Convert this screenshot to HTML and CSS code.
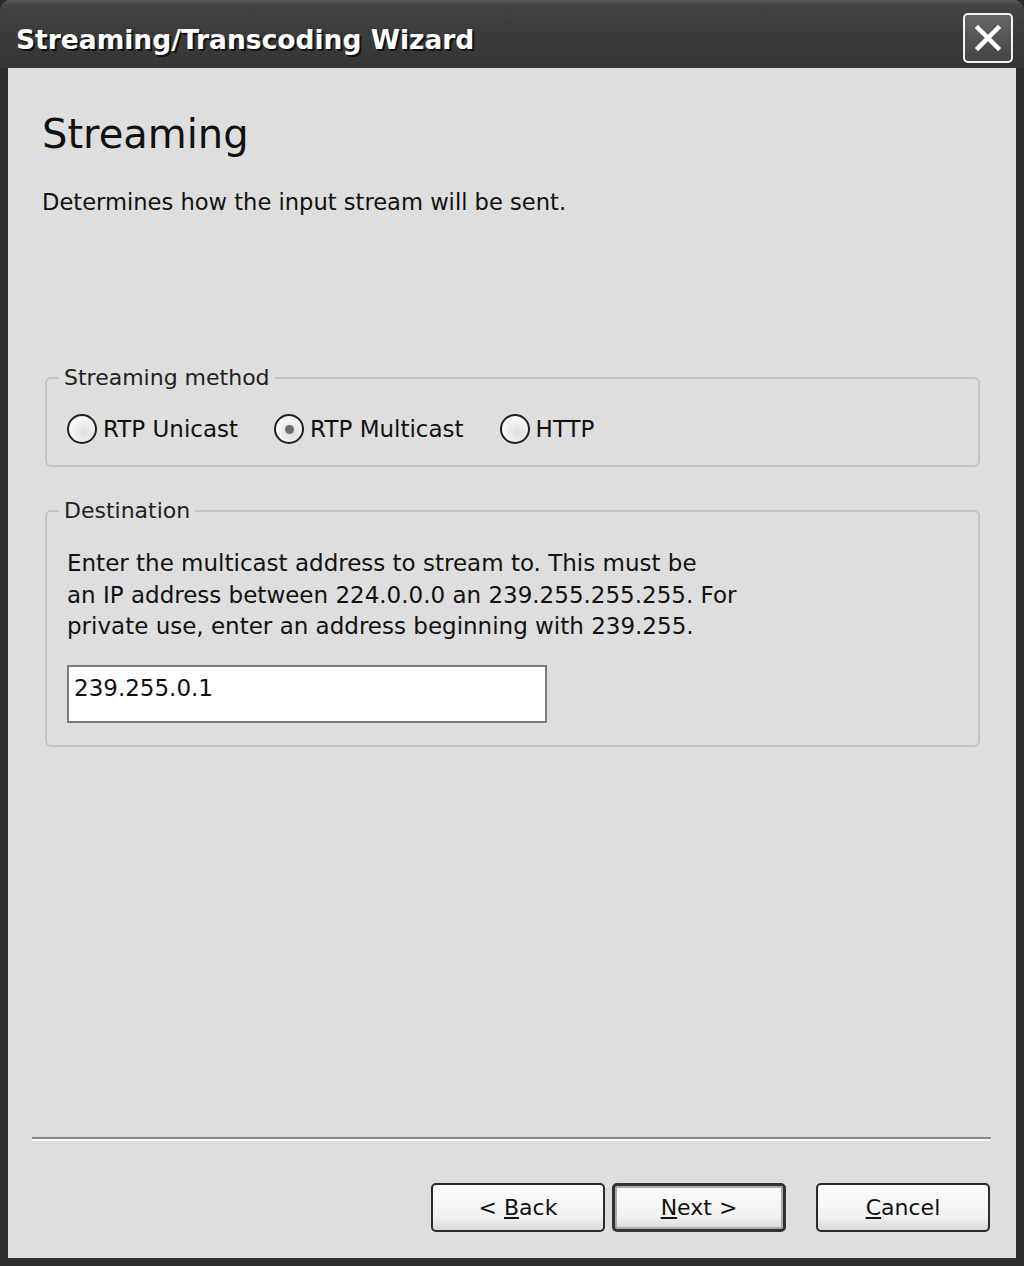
FILE: index.html
```html
<!DOCTYPE html>
<html lang="en">
<head>
    <meta charset="UTF-8">
    <title>Streaming/Transcoding Wizard</title>
    <link rel="stylesheet" href="styles.css">
</head>
<body>
    <div class="window">
        <div class="titlebar">
            <span class="title">Streaming/Transcoding Wizard</span>
            <span class="closeBtn">
                <svg width="30" height="30" viewBox="0 0 30 30">
                    <path d="M5 5 L25 25 M25 5 L5 25" stroke="#fff" stroke-width="4.5" stroke-linecap="square"/>
                </svg>
            </span>
        </div>

        <div class="content">
            <h1>Streaming</h1>
            <p class="intro">Determines how the input stream will be sent.</p>

            <fieldset class="group methodGroup">
                <legend>Streaming method</legend>
                <div class="radios">
                    <label class="radio"><span class="dot"></span>RTP Unicast</label>
                    <label class="radio checked"><span class="dot"></span>RTP Multicast</label>
                    <label class="radio"><span class="dot"></span>HTTP</label>
                </div>
            </fieldset>

            <fieldset class="group destGroup">
                <legend>Destination</legend>
                <p class="help">Enter the multicast address to stream to. This must be<br>
                an IP address between 224.0.0.0 an 239.255.255.255. For<br>
                private use, enter an address beginning with 239.255.</p>
                <div class="addrBox">239.255.0.1</div>
            </fieldset>
        </div>

        <div class="footer">
            <hr class="sep">
            <div class="buttons">
                <span class="btn"><span>&lt; <u>B</u>ack</span></span>
                <span class="btn default"><span><u>N</u>ext &gt;</span></span>
                <span class="btn cancel"><span><u>C</u>ancel</span></span>
            </div>
        </div>
    </div>
</body>
</html>
```

FILE: styles.css
```css
html, body {
    margin: 0;
    padding: 0;
    height: 100%;
}
body {
    font-family: "DejaVu Sans", sans-serif;
    background-color: #2a2a2a;
}
.window {
    height: 1266px;
    box-sizing: border-box;
    display: flex;
    flex-direction: column;
    background-color: #dedede;
    border-left: 8px solid #2e2e2e;
    border-right: 8px solid #2e2e2e;
    border-bottom: 8px solid #2e2e2e;
    border-radius: 10px 10px 0 0;
}
.titlebar {
    height: 68px;
    margin: 0 -8px;
    padding: 0 11px 0 16px;
    display: flex;
    align-items: center;
    justify-content: space-between;
    background: linear-gradient(#5a5a5a 0px, #454545 4px, #3c3c3c 30px, #353535 68px);
    border-radius: 10px 10px 0 0;
}
.title {
    color: #fff;
    font-weight: bold;
    font-size: 26.5px;
    text-shadow: 2px 2px 0 #111;
    margin-top: 10px;
}
.closeBtn {
    width: 46px;
    height: 46px;
    border: 2px solid #f4f4f4;
    border-radius: 5px;
    background: linear-gradient(#666, #444);
    display: flex;
    align-items: center;
    justify-content: center;
    margin-top: 8px;
}
.content {
    flex: 1;
    padding: 0 36px 0 34px;
}
h1 {
    font-size: 40px;
    font-weight: normal;
    color: #111;
    margin: 42px 0 0 0;
    line-height: 48px;
}
.intro {
    font-size: 22.6px;
    color: #111;
    margin: 31px 0 0 0;
}
.group {
    border: 2px solid #c4c4c4;
    border-radius: 6px;
    margin: 0 0 0 3px;
    padding: 0 20px;
    color: #111;
    font-size: 22px;
}
.group legend {
    padding: 0 5px;
    margin-left: -8px;
    color: #222;
}
.methodGroup {
    margin-top: 150px;
    padding-bottom: 21px;
}
.radios {
    display: flex;
    gap: 36px;
    margin-top: 24px;
}
.radio {
    display: flex;
    align-items: center;
    font-size: 23px;
}
.dot {
    width: 26px;
    height: 26px;
    border: 2px solid #1f1f1f;
    border-radius: 50%;
    background: radial-gradient(circle at 60% 65%, #dcdcdc, #fbfbfb 70%);
    margin-right: 6px;
    display: flex;
    align-items: center;
    justify-content: center;
}
.checked .dot::after {
    content: "";
    width: 9px;
    height: 9px;
    border-radius: 50%;
    background: #6d6d6d;
}
.destGroup {
    margin-top: 31px;
    padding-bottom: 22px;
}
.help {
    margin: 25px 0 0 0;
    line-height: 31.5px;
    font-size: 23px;
}
.addrBox {
    width: 480px;
    height: 58px;
    margin-top: 22px;
    background: #fff;
    border: 2px solid #7b7b7b;
    padding: 8px 5px 0;
    box-sizing: border-box;
    font-size: 23px;
}
.footer {
    padding: 0 26px 26px 24px;
}
.sep {
    border: none;
    border-top: 2px solid #888;
    border-bottom: 2px solid #fafafa;
    margin: 0 -1px 42px 0;
}
.buttons {
    display: flex;
    justify-content: flex-end;
    gap: 7px;
}
.btn {
    width: 174px;
    height: 49px;
    box-sizing: border-box;
    border: 2px solid #2a2a2a;
    border-radius: 5px;
    background: linear-gradient(#fdfdfd, #f2f2f2 70%, #d8d8d8);
    display: flex;
    align-items: center;
    justify-content: center;
    font-size: 22px;
    color: #111;
}
.btn.default {
    border: 3px solid #333;
    box-shadow: inset 0 0 0 2px #aaa;
}
.btn.cancel {
    margin-left: 23px;
}
```
